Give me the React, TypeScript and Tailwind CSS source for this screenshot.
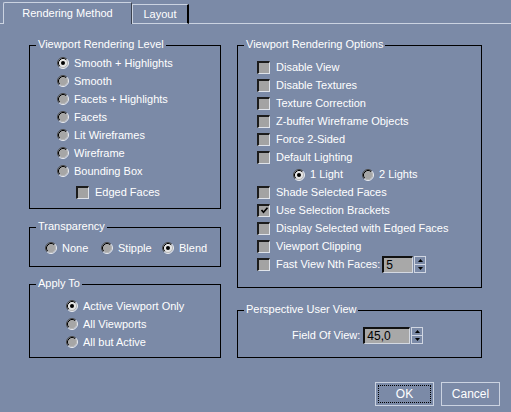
import React from "react";

function Radio({ checked }: { checked?: boolean }) {
  return (
    <svg width="12" height="12" viewBox="0 0 12 12" className="shrink-0">
      <circle cx="6" cy="6" r="5" fill={checked ? "#e4e4e4" : "#a6a6a6"} />
      <path d="M2.11 9.89 A5.5 5.5 0 0 1 9.89 2.11" fill="none" stroke="#4a4a4a" />
      <path d="M9.89 2.11 A5.5 5.5 0 0 1 2.11 9.89" fill="none" stroke="#eef0f4" />
      <path d="M2.82 9.18 A4.5 4.5 0 0 1 9.18 2.82" fill="none" stroke="#000" />
      <path d="M9.18 2.82 A4.5 4.5 0 0 1 2.82 9.18" fill="none" stroke="#b8b8b8" />
      {checked && <circle cx="6" cy="6" r="2" fill="#000" />}
    </svg>
  );
}

function Check({ checked }: { checked?: boolean }) {
  return (
    <div className="w-[13px] h-[13px] shrink-0 border-t-2 border-l-2 border-r border-b border-t-[#1c1c1c] border-l-[#1c1c1c] border-r-[#dfe3ea] border-b-[#dfe3ea] bg-[#a3a3a3] flex items-center justify-center">
      {checked && (
        <svg width="9" height="9" viewBox="0 0 9 9">
          <polyline points="1.5,4 3.5,6.2 7.5,1.8" fill="none" stroke="#000" strokeWidth="1.7" />
        </svg>
      )}
    </div>
  );
}

function RadioRow({ label, checked }: { label: string; checked?: boolean }) {
  return (
    <div className="h-[18px] flex items-center gap-[5px]">
      <Radio checked={checked} />
      <span className="whitespace-nowrap">{label}</span>
    </div>
  );
}

function CheckRow({ label, checked }: { label: string; checked?: boolean }) {
  return (
    <div className="h-[18px] flex items-center gap-[6px]">
      <Check checked={checked} />
      <span className="whitespace-nowrap">{label}</span>
    </div>
  );
}

function Spinner() {
  return (
    <div className="w-[12px] h-[17px] flex flex-col border border-[#d0d6e2]">
      <div className="flex-1 flex items-center justify-center">
        <svg width="5" height="3" viewBox="0 0 5 3">
          <polygon points="2.5,0 5,3 0,3" fill="#000" />
        </svg>
      </div>
      <div className="flex-1 flex items-center justify-center border-t border-[#d0d6e2]">
        <svg width="5" height="3" viewBox="0 0 5 3">
          <polygon points="0,0 5,0 2.5,3" fill="#000" />
        </svg>
      </div>
    </div>
  );
}

function Edit({ value, w }: { value: string; w: string }) {
  return (
    <div
      className={`${w} h-[17px] border-t-2 border-l-2 border-r border-b border-t-[#111] border-l-[#111] border-r-[#d4d9e2] border-b-[#d4d9e2] bg-[#a8a8a8] text-black text-[12px] leading-[14px] pl-[2px] flex items-center`}
    >
      {value}
    </div>
  );
}

function Group({
  title,
  className,
  children,
}: {
  title: string;
  className: string;
  children: React.ReactNode;
}) {
  return (
    <div className={`relative border border-black ${className}`}>
      <span className="absolute -top-[8px] left-[6px] px-[2px] bg-[#7b8aa7] leading-[13px] whitespace-nowrap">
        {title}
      </span>
      {children}
    </div>
  );
}

export default function App() {
  return (
    <div className="w-[511px] h-[412px] bg-[#7b8aa7] text-white text-[11px] leading-[13px] font-['Liberation_Sans',Arial,sans-serif] overflow-hidden select-none">
      {/* tabs */}
      <div className="flex h-[24px]">
        <div className="w-[3px] border-b border-[#cbd3e1]" />
        <div className="mt-[2px] w-[129px] h-[22px] border-t border-l border-r border-t-[#cbd3e1] border-l-[#cbd3e1] border-r-[#3b4250] rounded-tl-[2px] flex items-center justify-center">
          Rendering Method
        </div>
        <div className="mt-[4px] w-[57px] h-[20px] border-t border-l border-r-2 border-b border-t-[#cbd3e1] border-l-[#cbd3e1] border-r-black border-b-[#cbd3e1] flex items-center justify-center">
          Layout
        </div>
        <div className="flex-1 border-b border-[#cbd3e1]" />
      </div>

      {/* content */}
      <div className="flex pl-[29px] pt-[21px] gap-[16px]">
        <div className="w-[192px] flex flex-col">
          <Group title="Viewport Rendering Level" className="h-[164px] pt-[8px] pl-[27px]">
            <RadioRow label="Smooth + Highlights" checked />
            <RadioRow label="Smooth" />
            <RadioRow label="Facets + Highlights" />
            <RadioRow label="Facets" />
            <RadioRow label="Lit Wireframes" />
            <RadioRow label="Wireframe" />
            <RadioRow label="Bounding Box" />
            <div className="mt-[3px] ml-[19px]">
              <CheckRow label="Edged Faces" />
            </div>
          </Group>

          <Group title="Transparency" className="mt-[18px] h-[40px] pt-[11px] pl-[15px] flex">
            <div className="w-[56px]">
              <RadioRow label="None" />
            </div>
            <div className="w-[61px]">
              <RadioRow label="Stipple" />
            </div>
            <div>
              <RadioRow label="Blend" checked />
            </div>
          </Group>

          <Group title="Apply To" className="mt-[17px] h-[74px] pt-[12px] pl-[36px]">
            <RadioRow label="Active Viewport Only" checked />
            <RadioRow label="All Viewports" />
            <RadioRow label="All but Active" />
          </Group>
        </div>

        <div className="w-[245px] flex flex-col">
          <Group title="Viewport Rendering Options" className="h-[243px] pt-[12px] pl-[19px]">
            <CheckRow label="Disable View" />
            <CheckRow label="Disable Textures" />
            <CheckRow label="Texture Correction" />
            <CheckRow label="Z-buffer Wireframe Objects" />
            <CheckRow label="Force 2-Sided" />
            <CheckRow label="Default Lighting" />
            <div className="h-[17px] flex items-center ml-[36px]">
              <div className="w-[69px] flex items-center gap-[5px]">
                <Radio checked />
                <span>1 Light</span>
              </div>
              <div className="flex items-center gap-[5px]">
                <Radio />
                <span>2 Lights</span>
              </div>
            </div>
            <CheckRow label="Shade Selected Faces" />
            <CheckRow label="Use Selection Brackets" checked />
            <CheckRow label="Display Selected with Edged Faces" />
            <CheckRow label="Viewport Clipping" />
            <div className="h-[18px] flex items-center">
              <Check />
              <span className="ml-[6px] whitespace-nowrap">Fast View Nth Faces:</span>
              <div className="ml-[2px]">
                <Edit value="5" w="w-[31px]" />
              </div>
              <div className="ml-[1px]">
                <Spinner />
              </div>
            </div>
          </Group>

          <Group title="Perspective User View" className="mt-[22px] h-[48px] pt-[16px] pl-[54px]">
            <div className="h-[17px] flex items-center">
              <span className="whitespace-nowrap">Field Of View:</span>
              <div className="ml-[3px]">
                <Edit value="45,0" w="w-[47px]" />
              </div>
              <div className="ml-[1px]">
                <Spinner />
              </div>
            </div>
          </Group>
        </div>
      </div>

      {/* buttons */}
      <div className="flex justify-end gap-[7px] pr-[11px] mt-[24px]">
        <button className="w-[59px] h-[24px] border border-[#cbd3e1] flex items-center justify-center outline-dotted outline-1 outline-black -outline-offset-4 text-[12px]">
          OK
        </button>
        <button className="w-[59px] h-[24px] border border-[#cbd3e1] flex items-center justify-center text-[12px]">
          Cancel
        </button>
      </div>
    </div>
  );
}
